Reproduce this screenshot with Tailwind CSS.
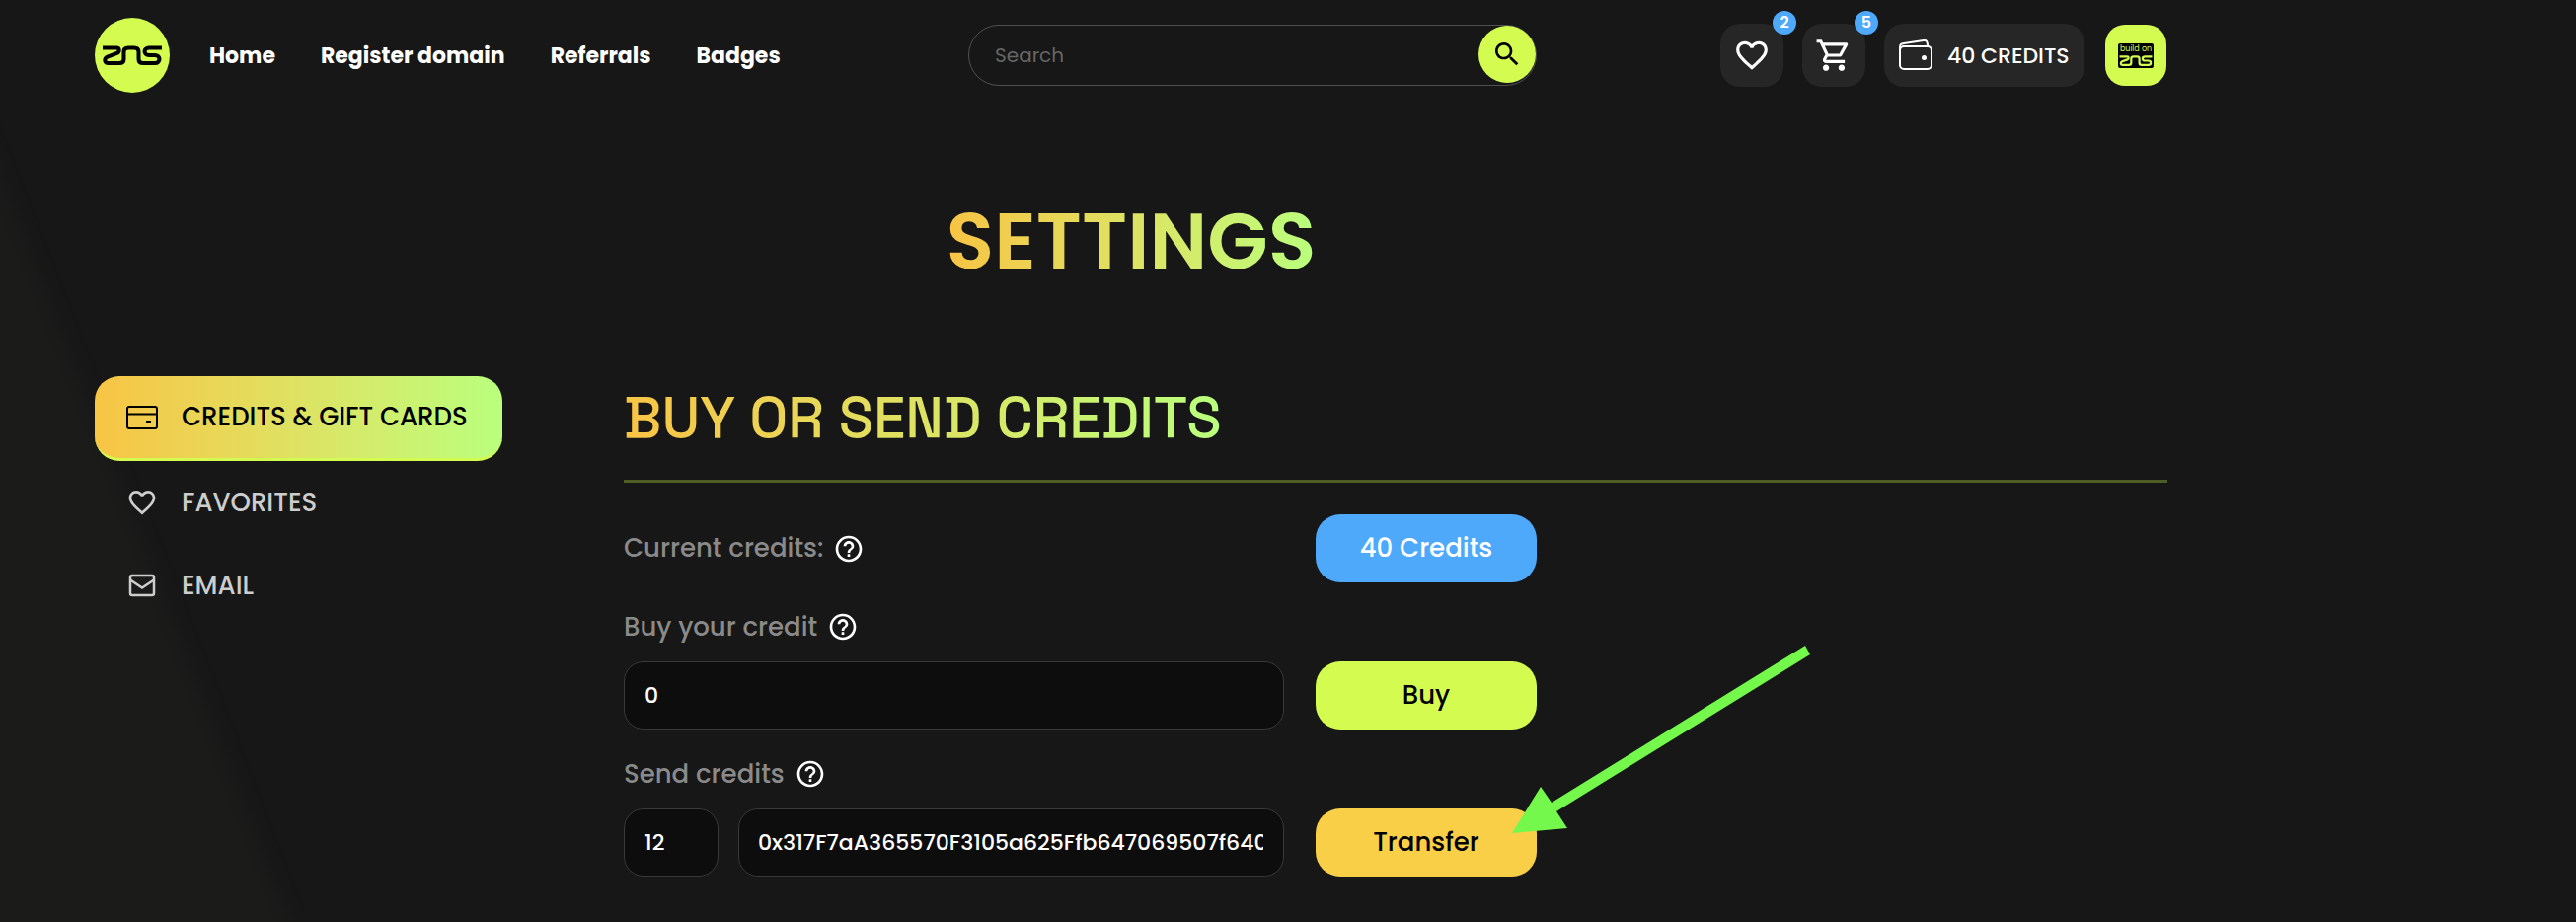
<!DOCTYPE html>
<html lang="en">
<head>
<meta charset="utf-8">
<title>Settings</title>
<script src="https://cdn.jsdelivr.net/npm/@tailwindcss/browser@4"></script>
</head>
<body class="relative min-h-screen overflow-x-hidden bg-[#171717] font-['Poppins','Inter',sans-serif] text-white">
<svg class="pointer-events-none absolute left-0 top-0" width="310" height="934" viewBox="0 0 310 934" aria-hidden="true">
  <defs><filter id="soft" x="-20%" y="-20%" width="140%" height="140%" color-interpolation-filters="sRGB"><feGaussianBlur stdDeviation="8"/></filter></defs>
  <path d="M-60 20L300 950V1000H-60z" fill="#1b1b1a" filter="url(#soft)"/>
</svg>
<svg class="hidden">
  <symbol id="help" viewBox="0 0 24 24"><path fill="currentColor" d="M11 18h2v-2h-2v2zm1-16C6.480 2 2 6.480 2 12s4.480 10 10 10 10-4.480 10-10S17.520 2 12 2zm0 18c-4.410 0-8-3.590-8-8s3.590-8 8-8 8 3.590 8 8-3.590 8-8 8zm0-14c-2.210 0-4 1.790-4 4h2c0-1.100.9-2 2-2s2 .9 2 2c0 2-3 1.750-3 5h2c0-2.250 3-2.500 3-5 0-2.210-1.790-4-4-4z"/></symbol>
  <symbol id="zns" viewBox="0 0 60 20"><path fill="none" stroke="currentColor" stroke-width="4" d="M0 2.500H14C17.500 2.500 17.500 6.500 14.500 8L5 11.500C1 13.500 1.500 18 6 18H17C20 18 21.500 16.500 21.500 14V6.500C21.500 4 23 2.500 26 2.500H32C35 2.500 36.500 4 36.500 6.500V14C36.500 16.500 38 18 41 18H53C59 18 59 10 53 10H47C41 10 41 2.500 47 2.500H60"/></symbol>
</svg>
<div class="relative max-w-[2292px] px-24">
  <header class="flex h-[112px] items-center">
    <a href="#" aria-label="ZNS home" class="flex size-[76px] items-center justify-center rounded-full bg-[#d4fc50] text-black"><svg class="h-5 w-[60px]"><use href="#zns"/></svg></a>
    <nav class="ml-10 flex gap-[46px] text-[22px] font-bold">
      <a href="#">Home</a><a href="#">Register domain</a><a href="#">Referrals</a><a href="#">Badges</a>
    </nav>
    <form class="ml-auto flex h-[62px] w-[576px] items-start rounded-full border border-[#505050]">
      <input type="search" aria-label="Search" placeholder="Search" class="h-full min-w-0 flex-1 bg-transparent pl-[26px] text-[20px] outline-none placeholder:text-[#666]">
      <button type="button" aria-label="Search" class="flex size-[58px] items-center justify-center rounded-full bg-[#d4fc50] text-black"><svg class="size-8" viewBox="0 0 24 24" fill="currentColor"><path d="M15.500 14h-.79l-.28-.27C15.410 12.590 16 11.110 16 9.500 16 5.910 13.090 3 9.500 3S3 5.910 3 9.500 5.910 16 9.500 16c1.610 0 3.090-.59 4.230-1.570l.27.28v.79l5 4.990L20.490 19l-4.990-5zm-6 0C7.010 14 5 11.990 5 9.500S7.010 5 9.500 5 14 7.010 14 9.500 11.990 14 9.500 14z"/></svg></button>
    </form>
    <div class="ml-[186px] mr-px flex items-center">
      <button aria-label="Favorites" class="relative flex size-16 items-center justify-center rounded-[20px] bg-[#262626]">
        <svg class="size-[38px]" viewBox="0 0 24 24" fill="currentColor"><path d="M16.500 3c-1.740 0-3.410.81-4.500 2.090C10.910 3.810 9.240 3 7.500 3 4.420 3 2 5.420 2 8.500c0 3.780 3.400 6.860 8.550 11.540L12 21.350l1.450-1.320C18.600 15.360 22 12.280 22 8.500 22 5.420 19.580 3 16.500 3zm-4.400 15.550l-.1.100-.1-.1C7.140 14.240 4 11.390 4 8.500 4 6.500 5.500 5 7.500 5c1.540 0 3.040.99 3.570 2.360h1.870C13.460 5.990 14.960 5 16.500 5c2 0 3.500 1.500 3.500 3.500 0 2.890-3.140 5.740-7.900 10.050z"/></svg>
        <span class="absolute -right-[13px] -top-[13px] flex size-6 items-center justify-center rounded-full bg-[#4fa9fa] text-[16px] font-semibold">2</span>
      </button>
      <button aria-label="Cart" class="relative ml-[19px] flex size-16 items-center justify-center rounded-[20px] bg-[#262626]">
        <svg class="size-[38px]" viewBox="0 0 24 24" fill="currentColor"><path d="M15.550 13c.75 0 1.410-.41 1.750-1.030l3.580-6.490C21.250 4.820 20.770 4 20.010 4H5.210l-.94-2H1v2h2l3.600 7.590-1.350 2.440C4.520 15.370 5.480 17 7 17h12v-2H7l1.100-2h7.450zM6.160 6h12.150l-2.760 5H8.530L6.160 6zM7 18c-1.100 0-1.990.9-1.990 2S5.900 22 7 22s2-.9 2-2-.9-2-2-2zm10 0c-1.100 0-1.990.9-1.990 2s.89 2 1.990 2 2-.9 2-2-.9-2-2-2z"/></svg>
        <span class="absolute -right-[13px] -top-[13px] flex size-6 items-center justify-center rounded-full bg-[#4fa9fa] text-[16px] font-semibold">5</span>
      </button>
      <button class="ml-[19px] flex h-16 w-[203px] items-center gap-[14px] whitespace-nowrap rounded-[20px] bg-[#262626] pl-[14px] text-[22px] font-medium">
        <svg class="size-9 shrink-0" viewBox="0 0 36 36" fill="none" stroke="currentColor" stroke-width="2"><rect x="2" y="9" width="32" height="23" rx="4"/><path d="M2 13V10C2 7 3 6.500 6 6L26 3C29 2.500 30 4 30 9"/><circle cx="26.500" cy="20.500" r="2.500" fill="currentColor" stroke="none"/></svg>
        40 CREDITS</button>
      <button aria-label="Account" class="ml-[21px] flex size-[62px] items-center justify-center rounded-[20px] bg-[#d4fc50]">
        <span class="flex h-[25px] w-9 flex-col items-center rounded-[2px] bg-black text-[#d4fc50]"><span class="text-[8px] leading-[12px]">build on</span><svg class="h-[11px] w-9" preserveAspectRatio="none"><use href="#zns"/></svg></span>
      </button>
    </div>
  </header>
  <h1 class="mx-auto mt-[82px] w-fit bg-linear-to-r from-[#f8c444] to-[#b9ff7d] bg-clip-text text-[80px] font-semibold leading-[100px] text-transparent">SETTINGS</h1>
  <div class="mt-[87px] flex items-start">
    <nav class="w-[413px] shrink-0 text-[26px] font-medium text-[#cdcdcd]">
      <a href="#" class="flex h-[86px] items-center gap-6 whitespace-nowrap rounded-[25px] border-b-3 border-[#d4fc50] bg-linear-to-r from-[#f8c444] to-[#b9ff7d] pl-8 text-black">
        <svg class="size-8" viewBox="0 0 32 32" fill="none" stroke="currentColor" stroke-width="2"><rect x="1" y="5" width="30" height="22" rx="2"/><path d="M1 12.500H31M20 20h5"/></svg>CREDITS &amp; GIFT CARDS</a>
      <a href="#" class="flex h-[84px] items-center gap-6 pl-8"><svg class="size-8" viewBox="0 0 24 24" fill="currentColor"><path d="M16.500 3c-1.740 0-3.410.81-4.500 2.090C10.910 3.810 9.240 3 7.500 3 4.420 3 2 5.420 2 8.500c0 3.780 3.400 6.860 8.550 11.540L12 21.350l1.450-1.320C18.600 15.360 22 12.280 22 8.500 22 5.420 19.580 3 16.500 3zm-4.400 15.550l-.1.100-.1-.1C7.140 14.240 4 11.390 4 8.500 4 6.500 5.500 5 7.500 5c1.540 0 3.040.99 3.570 2.360h1.870C13.460 5.990 14.960 5 16.500 5c2 0 3.500 1.500 3.500 3.500 0 2.890-3.140 5.740-7.900 10.050z"/></svg>FAVORITES</a>
      <a href="#" class="flex h-[84px] items-center gap-6 pl-8"><svg class="size-8" viewBox="0 0 32 32" fill="none" stroke="currentColor" stroke-width="2.500"><rect x="4" y="6" width="24" height="20" rx="2"/><path d="M4 10.500L16 18.500L28 10.500"/></svg>EMAIL</a>
    </nav>
    <main class="ml-[123px] min-w-0 flex-1">
      <div class="flex h-[108px] items-start border-b-3 border-[#505c26]">
        <h2 class="bg-linear-to-r from-[#f8c444] to-[#b9ff7d] bg-clip-text font-['Space_Grotesk','Inter',sans-serif] text-[58px] font-medium leading-[84px] text-transparent">BUY OR SEND CREDITS</h2>
      </div>
      <div class="mt-8 grid max-w-[925px] grid-cols-[minmax(0,1fr)_224px] gap-x-8 text-[26px] font-medium text-[#8a8a8a]">
        <p class="flex items-center gap-[10px]">Current credits: <svg class="size-8 text-white"><use href="#help"/></svg></p>
        <button class="h-[69px] rounded-[25px] bg-[#4fa9fa] text-white">40 Credits</button>
        <label for="buy" class="col-span-2 mt-[25px] flex h-10 items-center gap-[10px]">Buy your credit <svg class="size-8 text-white"><use href="#help"/></svg></label>
        <input id="buy" value="0" class="mt-[15px] h-[69px] min-w-0 rounded-[20px] border border-[#393939] bg-[#0d0d0d] px-5 text-[22px] text-white">
        <button class="mt-[15px] h-[69px] rounded-[25px] bg-[#d4fc50] text-black">Buy</button>
        <label for="send" class="col-span-2 mt-[25px] flex h-10 items-center gap-[10px]">Send credits <svg class="size-8 text-white"><use href="#help"/></svg></label>
        <div class="mt-[15px] flex gap-5 text-[22px] text-white">
          <input id="send" value="12" class="h-[69px] w-24 rounded-[20px] border border-[#393939] bg-[#0d0d0d] px-5">
          <input aria-label="Recipient address" value="0x317F7aA365570F3105a625Ffb647069507f640" class="h-[69px] min-w-0 flex-1 rounded-[20px] border border-[#393939] bg-[#0d0d0d] pl-[19px] pr-5">
        </div>
        <div class="relative mt-[15px]">
          <button class="h-[69px] w-full rounded-[25px] bg-[#f9cf47] text-black">Transfer</button>
          <svg class="pointer-events-none absolute left-[198px] -top-[166px]" width="304" height="192" viewBox="0 0 304 192" aria-hidden="true"><path fill="#73f84b" d="M1 191L30 144L41 160L298 1L303 10L46 169L57 186z"/></svg>
        </div>
      </div>
    </main>
  </div>
</div>
</body>
</html>
